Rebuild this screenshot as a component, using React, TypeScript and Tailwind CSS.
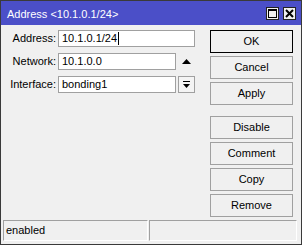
import React from "react";

const font = { fontFamily: '"Liberation Sans", Arial, sans-serif' };

function Field({ value, width, cursor }: { value: string; width: string; cursor?: boolean }) {
  return (
    <div className={`h-[17px] ${width} ml-[2px] bg-white border border-[#a0a0a0] flex items-center pl-[3px] text-[11px] leading-[15px] text-black`}>
      {value}
      {cursor && <span className="inline-block w-[1px] h-[13px] bg-black ml-[1px]" />}
    </div>
  );
}

function Btn({ children, primary }: { children: React.ReactNode; primary?: boolean }) {
  return (
    <button
      className={`h-[23px] w-[83px] bg-[#f0f0f0] text-[11px] text-black flex items-center justify-center border ${
        primary ? "border-black" : "border-[#a0a0a0]"
      }`}
    >
      {children}
    </button>
  );
}

export default function App() {
  return (
    <div
      className="w-[302px] h-[245px] bg-[#f0f0f0] border border-[#3a3a3a] flex flex-col"
      style={font}
    >
      {/* title bar */}
      <div className="h-[24px] bg-[#4b4fc8] flex items-center pl-[6px] pr-[5px]">
        <span className="text-white text-[11px] flex-1 mt-[3px]">Address &lt;10.1.0.1/24&gt;</span>
        <div className="flex gap-[4px]">
          <div className="w-[13px] h-[13px] bg-[#f0f0f0] border border-[#222] flex items-center justify-center">
            <svg width="9" height="9" viewBox="0 0 9 9">
              <rect x="0.5" y="0.5" width="8" height="8" fill="none" stroke="#000" />
              <rect x="0" y="0" width="9" height="2" fill="#000" />
            </svg>
          </div>
          <div className="w-[13px] h-[13px] bg-[#f0f0f0] border border-[#222] flex items-center justify-center">
            <svg width="9" height="9" viewBox="0 0 9 9">
              <path d="M1 1 L8 8 M8 1 L1 8" stroke="#000" strokeWidth="2" />
            </svg>
          </div>
        </div>
      </div>

      {/* body */}
      <div className="flex-1 flex pt-[5px]">
        <div className="flex flex-col gap-[6px] text-[11px] text-black">
          <div className="flex items-center">
            <span className="w-[55px] text-right">Address:</span>
            <Field value="10.1.0.1/24" width="w-[137px]" cursor />
          </div>
          <div className="flex items-center">
            <span className="w-[55px] text-right">Network:</span>
            <Field value="10.1.0.0" width="w-[118px]" />
            <div className="w-[17px] ml-[2px] flex justify-center">
              <svg width="9" height="5" viewBox="0 0 9 5">
                <path d="M4.5 0 L9 5 L0 5 Z" fill="#000" />
              </svg>
            </div>
          </div>
          <div className="flex items-center">
            <span className="w-[55px] text-right">Interface:</span>
            <Field value="bonding1" width="w-[118px]" />
            <div className="w-[17px] h-[17px] ml-[2px] bg-[#f4f4f4] border border-[#a0a0a0] flex items-center justify-center">
              <svg width="7" height="8" viewBox="0 0 7 8">
                <rect x="0" y="0" width="7" height="1" fill="#000" />
                <path d="M0 3 L7 3 L3.5 7 Z" fill="#000" />
              </svg>
            </div>
          </div>
        </div>

        <div className="ml-[15px] flex flex-col gap-[3px]">
          <Btn primary>OK</Btn>
          <Btn>Cancel</Btn>
          <Btn>Apply</Btn>
          <div className="mt-[5px]" />
          <Btn>Disable</Btn>
          <Btn>Comment</Btn>
          <Btn>Copy</Btn>
          <Btn>Remove</Btn>
        </div>
      </div>

      {/* status bar */}
      <div className="h-[21px] mb-[3px] ml-[2px] mr-[4px] flex gap-[1px]">
        <div className="w-[145px] border-t border-l border-[#a0a0a0] border-b-white border-r-white border-b border-r flex items-center pl-[2px] text-[11px] text-black">
          enabled
        </div>
        <div className="flex-1 border-t border-l border-[#a0a0a0] border-b-white border-r-white border-b border-r" />
      </div>
    </div>
  );
}
